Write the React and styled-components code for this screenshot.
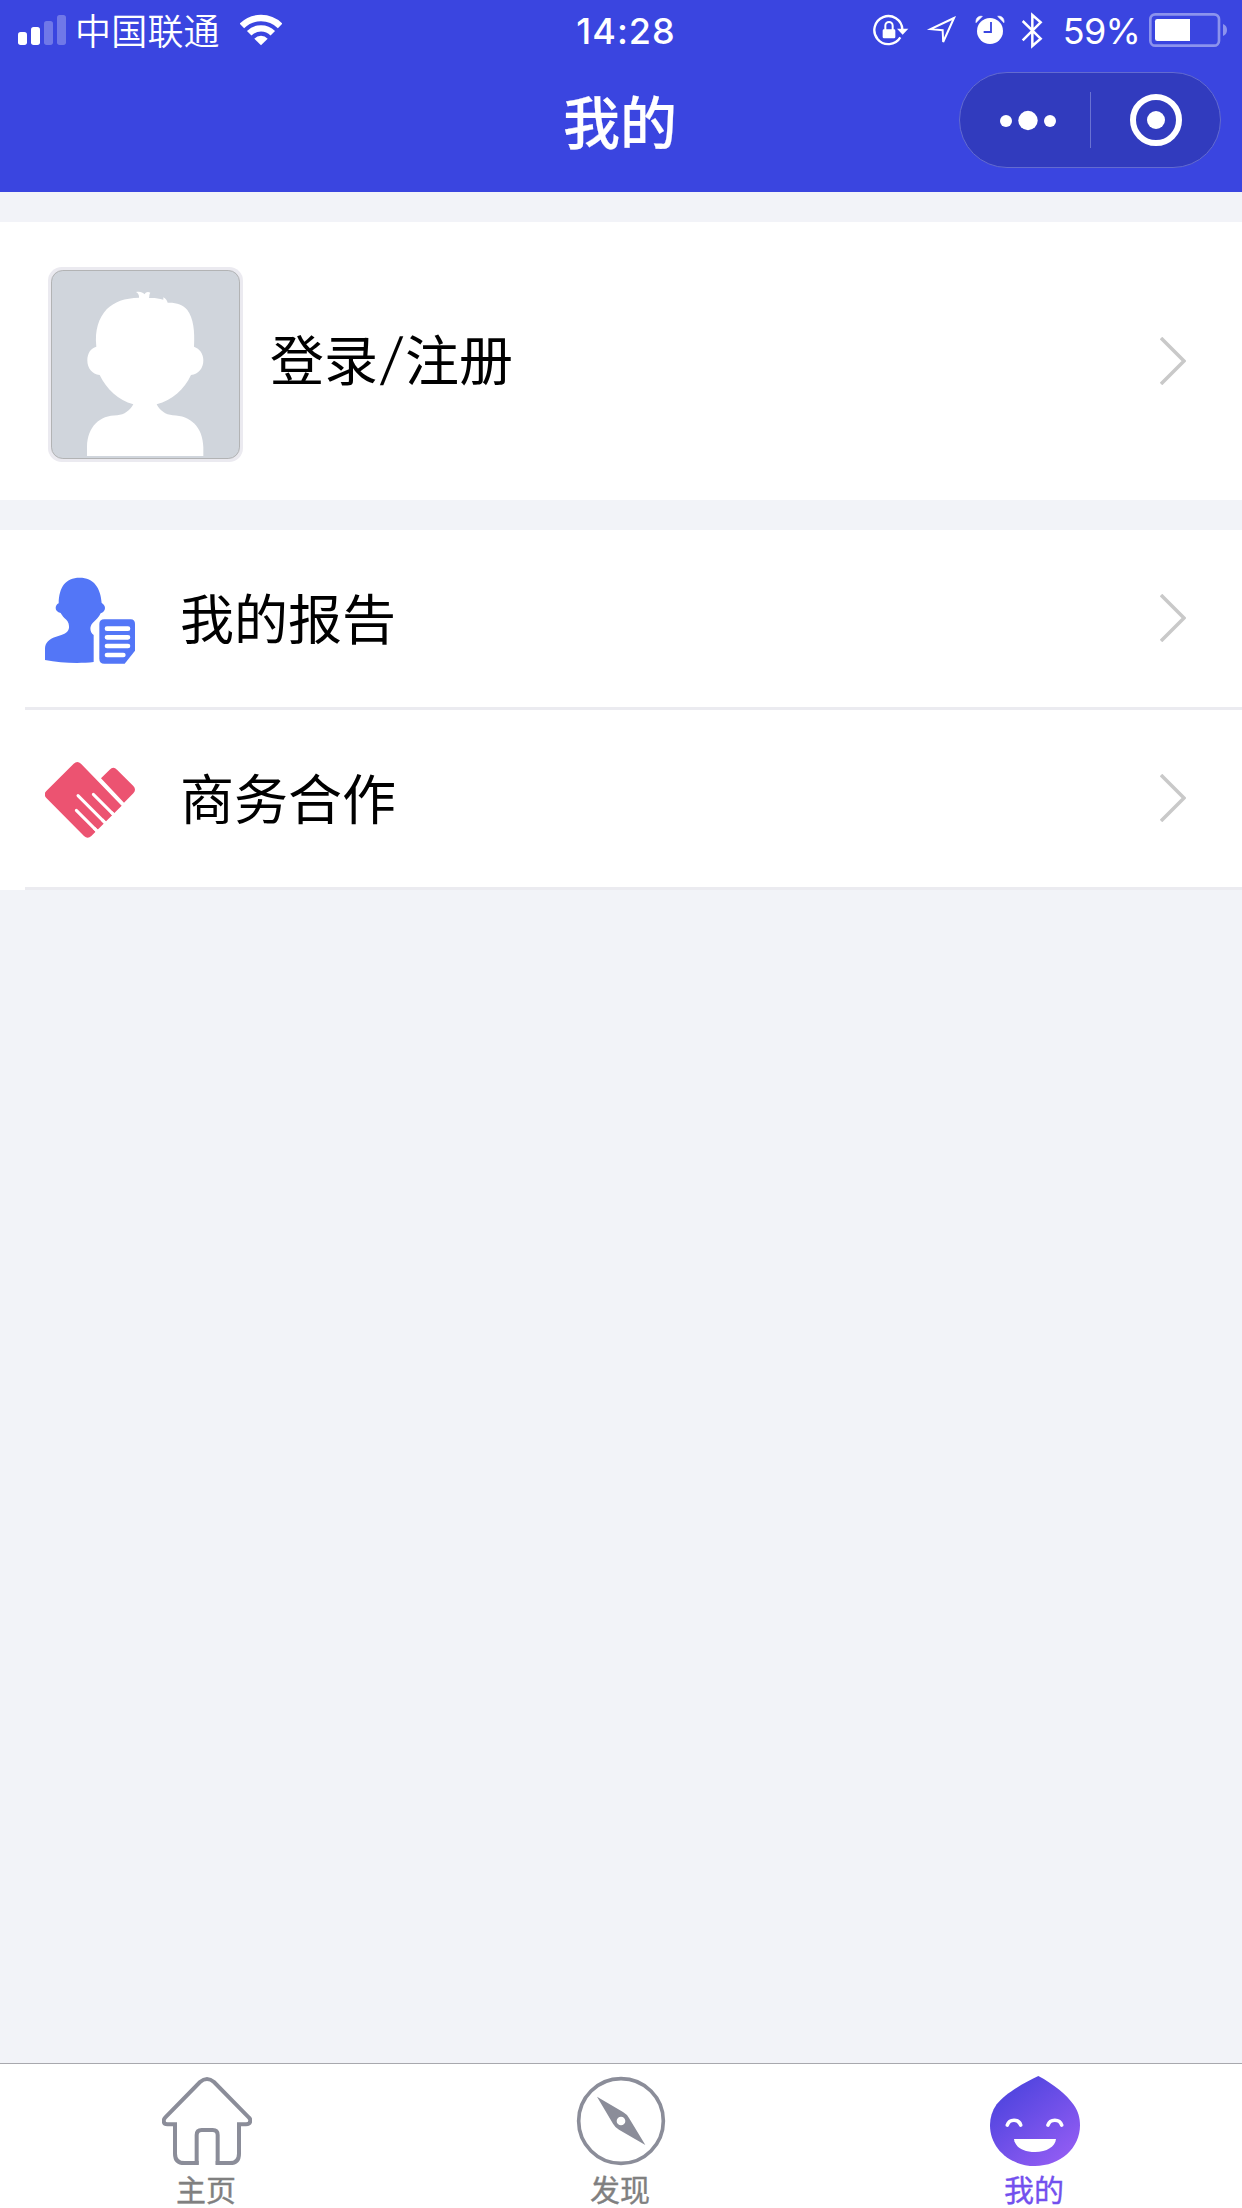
import React from 'react'

import styled, { createGlobalStyle } from 'styled-components'

const GlobalStyle = createGlobalStyle`
* {
  box-sizing: border-box;
}

body {
  margin: 0;
  background: #f2f3f8;
  font-family: "Noto Sans CJK SC", sans-serif;
}
`;

const Page = styled.div`
display: flex;
flex-direction: column;
height: 2208px;
background: #f2f3f8;
`;

const Header = styled.header`
height: 192px;
background: #3a45e0;
color: #fff;
`;

const StatusBar = styled.div`
display: grid;
grid-template-columns: 1fr auto 1fr;
height: 60px;
`;

const StatusSide = styled.div`
display: flex;
align-items: center;
justify-content: ${props => props.$end ? 'flex-end' : 'flex-start'};
height: 60px;
padding: 0 14px 0 18px;
`;

const Carrier = styled.span`
margin: 0 20px 3px 9px;
font-size: 36px;
font-weight: 350;
letter-spacing: 0.2px;
line-height: 56px;
`;

const Time = styled.span`
padding: 1px 0 0 10px;
font-family: "Inter", sans-serif;
font-size: 36px;
font-weight: 550;
letter-spacing: 1px;
line-height: 60px;
`;

const Percent = styled.span`
margin: 1px 8px 0 19px;
font-family: "Inter", sans-serif;
font-size: 36px;
font-weight: 400;
letter-spacing: -0.8px;
line-height: 60px;
`;

const Glyph = styled.svg`
display: block;
flex: none;
width: ${props => props.$w}px;
height: 60px;
margin-right: ${props => props.$gap || 0}px;
`;

const NavBar = styled.div`
display: grid;
grid-template-columns: 1fr auto 1fr;
height: 120px;
`;

const Title = styled.h1`
grid-column: 2;
margin: 0 2px 0 0;
font-size: 57px;
font-weight: 500;
line-height: 118px;
-webkit-text-stroke: 0.2px #fff;
`;

const Capsule = styled.div`
display: flex;
align-items: center;
justify-self: end;
width: 262px;
height: 96px;
margin: 12px 21px 0 0;
border: 1px solid #636bd0;
border-radius: 48px;
background: #313bbe;
`;

const CapsuleIcon = styled.svg`
display: block;
flex: none;
width: 130px;
height: 94px;
`;

const CapsuleLine = styled.div`
flex: none;
width: 1px;
height: 56px;
background: #6a72d2;
`;

const Account = styled.section`
display: flex;
align-items: center;
height: 278px;
margin-top: 30px;
padding: 0 56px 0 48px;
background: #fff;
`;

const Avatar = styled.svg`
display: block;
width: 195px;
height: 195px;
margin-top: 7px;
`;

const AccountName = styled.span`
flex: 1;
margin: 0 0 6px 27px;
font-size: 54px;
line-height: 80px;
color: #000;
`;

const Slash = styled.span`
display: inline-block;
width: 27px;
font-family: "Inter", sans-serif;
font-size: 56px;
font-weight: 350;
line-height: 60px;
text-align: center;
transform: skewX(-8deg) translateY(-2px);
`;

const Menu = styled.section`
margin-top: 30px;
background: #fff;
`;

const MenuRow = styled.div`
display: flex;
align-items: center;
height: 180px;
margin-left: 25px;
padding: 3px 56px 0 20px;
border-bottom: 3px solid #ebebf0;
`;

const MenuIcon = styled.svg`
display: block;
width: 90px;
height: 90px;
`;

const MenuLabel = styled.span`
flex: 1;
margin: 0 0 7px 45px;
font-size: 54px;
line-height: 80px;
color: #000;
`;

const Arrow = styled.svg`
display: block;
width: 26px;
height: 48px;
margin-top: ${props => props.$top || 0}px;
`;

const TabBar = styled.nav`
display: grid;
grid-template-columns: repeat(3, 1fr);
height: 145px;
margin-top: auto;
border-top: 1px solid #a8a8ae;
background: #fff;
`;

const Tab = styled.div`
display: flex;
flex-direction: column;
align-items: center;
padding-top: 12px;
`;

const TabLabel = styled.span`
margin-right: 2px;
font-size: 30px;
font-weight: 400;
line-height: 44px;
color: ${props => props.$active ? '#7350ee' : '#808080'};
-webkit-text-stroke: 0.35px currentColor;
`;

const TabIcon = styled.svg`
display: block;
flex: none;
width: 90px;
height: 90px;
`;

const Signal = () => (
  <Glyph $w={48} viewBox="54 0 144 180" fill="#fff">
    <rect x="54" y="96" width="27" height="39" rx="8" />
    <rect x="93" y="81" width="27" height="54" rx="8" />
    <rect x="132" y="63" width="27" height="72" rx="8" opacity=".28" />
    <rect x="171" y="45" width="27" height="90" rx="8" opacity=".28" />
  </Glyph>
)

const Wifi = () => (
  <Glyph $w={42} viewBox="720 0 126 180" fill="none" stroke="#fff" strokeWidth="19">
    <path d="M725.7 77.7A81 81 0 0 1 840.3 77.7" />
    <path d="M747.6 99.6A50 50 0 0 1 818.4 99.6" />
    <path d="M783 136L763 116A28 28 0 0 1 803 116Z" fill="#fff" stroke="none" />
  </Glyph>
)

const RotationLock = () => (
  <Glyph $w={36} $gap={16} viewBox="42 0 108 180" fill="none" stroke="#fff" strokeWidth="7">
    <path d="M130 88A42 42 0 1 0 124 112" />
    <path d="M114 86H148L131 104Z" fill="#fff" stroke="none" />
    <path d="M79 92V77A11 11 0 0 1 101 77V92" strokeWidth="6" />
    <rect x="71" y="88" width="38" height="27" rx="4" fill="#fff" stroke="none" />
  </Glyph>
)

const Location = () => (
  <Glyph $w={32} $gap={18} viewBox="198 0 96 180" fill="none" stroke="#fff" strokeWidth="6">
    <path d="M285 54L215 87.500L251 90.500L252.500 126Z" />
  </Glyph>
)

const Alarm = () => (
  <Glyph $w={30} $gap={16} viewBox="348 0 90 180">
    <circle cx="393" cy="93" r="39" fill="#fff" />
    <path d="M351 68C350 54 358 47 370 49ZM435 68C436 54 428 47 416 49Z" fill="#fff" stroke="#fff" strokeWidth="2" />
    <path d="M396 66V96H374" fill="none" stroke="#3a45e0" strokeWidth="5.500" />
  </Glyph>
)

const Bluetooth = () => (
  <Glyph $w={23} viewBox="486 0 69 180" fill="none" stroke="#fff" strokeWidth="7.500">
    <path d="M491 63L545 116L520 138V45L545 67L491 121" />
  </Glyph>
)

const Battery = () => (
  <Glyph $w={80} viewBox="864 0 240 180" fill="#fff">
    <rect x="871" y="43" width="206" height="94" rx="15" fill="none" stroke="#fff" strokeWidth="8" opacity=".42" />
    <path d="M892 57H990V123H892Q885 123 885 116V64Q885 57 892 57Z" />
    <path d="M1089 72Q1101 77 1101 90T1089 108Z" opacity=".42" />
  </Glyph>
)

const Chevron = ({ top }) => (
  <Arrow $top={top} viewBox="0 0 26 48" fill="none" stroke="#c9c9c9" strokeWidth="3.500">
    <path d="M1 1L24 24L1 47" />
  </Arrow>
)

const DefaultAvatar = () => (
  <Avatar viewBox="54 51 585 585">
    <rect x="54" y="51" width="585" height="585" rx="42" fill="#ebeaf0" />
    <rect x="64.500" y="61.500" width="564" height="564" rx="34" fill="#d0d5dc" stroke="#b2b3b4" strokeWidth="3" />
    <path
      fill="#fff"
      d="M171 618V590C173 530 208 496 262 496C283 494 300 482 310 463C265 450 230 418 209 375C186 373 172 355 172 331C172 309 183 294 199 290C194 239 206 205 230 178C253 155 284 144 327 143C328 136 325 130 318 126C329 124 338 126 344 133C347 126 354 124 361 128C357 133 359 138 357 144C372 143 386 145 400 149V142C407 145 411 151 413 158C438 157 459 163 472 180C490 204 495 243 492 290C509 296 520 311 520 331C520 355 506 373 483 375C463 418 427 450 380 463C389 482 407 494 428 496C482 497 519 532 520 592V618Z"
    />
  </Avatar>
)

const ReportIcon = () => (
  <MenuIcon viewBox="135 285 270 270">
    <path
      fill="#5376f7"
      d="M135 540V505C136 487 148 477 166 471L184 465C201 459 208 452 207 438C207 427 200 420 193 414C187 407 184 403 182 399C172 397 167 391 167 384C167 378 170 373 176 370C177 322 196 293 239 293C281 293 302 323 305 369C311 373 315 378 315 384C315 391 310 397 302 400C297 411 287 421 278 429C269 438 268 455 281 465V546C238 551 181 549 135 540Z"
    />
    <path
      fill="#5376f7"
      d="M313 418H392Q405 418 405 432V512L374 551H313Q298 551 298 536V432Q298 418 313 418Z"
    />
    <path d="M321 446H384M321 472H384M321 498H384M321 525H370" stroke="#fff" strokeWidth="14" strokeLinecap="round" />
  </MenuIcon>
)

const HandshakeIcon = () => (
  <MenuIcon viewBox="135 105 270 270">
    <path
      fill="#ec5371"
      d="M221 131Q232 121 243 131L365 257L274 348Q263 358 252 348L139 234Q129 223 139 213ZM303 175L329 149Q340 138 351 149L400 198Q410 209 400 220L372 248Z"
    />
    <path d="M280 223L340 283M234 227L314 307M229 271L292 334" stroke="#fff" strokeWidth="9" strokeLinecap="round" />
    <path d="M334 277L348 291M306 299L322 315M282 324L300 342" stroke="#fff" strokeWidth="9" />
  </MenuIcon>
)

const HomeIcon = () => (
  <TabIcon viewBox="96 108 270 270" fill="none" stroke="#8b8d99" strokeWidth="12">
    <path d="M206 369H163Q135 369 135 341V253H112Q101 253 101 242Q102 236 106 232L210 126Q231 108 252 126L356 232Q361 236 361 242Q360 253 348 253H327V341Q327 369 300 369H257" />
    <path d="M200 374V285Q200 270 215 270H248Q263 270 263 285V374" />
  </TabIcon>
)

const CompassIcon = () => (
  <TabIcon viewBox="108 108 270 270">
    <circle cx="243" cy="243" r="127" fill="none" stroke="#8b8d99" strokeWidth="11" />
    <path
      fill="#8b8d99"
      fillRule="evenodd"
      d="M171 170L249 216Q261 223 267 234L316 315L237 269Q225 262 219 251ZM243 230A13 13 0 1 0 243 256A13 13 0 1 0 243 230Z"
    />
  </TabIcon>
)

const FaceIcon = () => (
  <TabIcon viewBox="120 108 270 270">
    <defs>
      <linearGradient id="drop" x1="0.2" y1="0.15" x2="0.8" y2="0.9">
        <stop offset="0" stopColor="#5145df" />
        <stop offset="1" stopColor="#8f5bf2" />
      </linearGradient>
    </defs>
    <path d="M265 108C310 132 350 164 371 194C385 214 390 234 390 256C390 325 331 378 255 378C179 378 120 325 120 256C120 234 126 213 140 193C163 162 217 131 265 108Z" fill="url(#drop)" />
    <path d="M172 255C178 236 206 236 212 255M294 255C300 236 329 236 335 255" fill="none" stroke="#fff" strokeWidth="11" strokeLinecap="round" />
    <path d="M192 297H318C316 320 290 336 255 336C220 336 194 320 192 297Z" fill="#fff" />
  </TabIcon>
)

const menu = [
  { label: '我的报告', icon: <ReportIcon /> },
  { label: '商务合作', icon: <HandshakeIcon /> },
]

const tabs = [
  { label: '主页', icon: <HomeIcon /> },
  { label: '发现', icon: <CompassIcon /> },
  { label: '我的', icon: <FaceIcon />, active: true },
]

export default () => (
  <Page>
    <GlobalStyle />
    <Header>
      <StatusBar>
        <StatusSide>
          <Signal />
          <Carrier>中国联通</Carrier>
          <Wifi />
        </StatusSide>
        <Time>14:28</Time>
        <StatusSide $end>
          <RotationLock />
          <Location />
          <Alarm />
          <Bluetooth />
          <Percent>59%</Percent>
          <Battery />
        </StatusSide>
      </StatusBar>
      <NavBar>
        <Title>我的</Title>
        <Capsule>
          <CapsuleIcon viewBox="960 73 130 94" fill="#fff">
            <circle cx="1006" cy="121" r="6" />
            <circle cx="1028" cy="120.500" r="9.700" />
            <circle cx="1050" cy="121" r="6" />
          </CapsuleIcon>
          <CapsuleLine />
          <CapsuleIcon viewBox="1091 73 130 94" fill="#fff">
            <circle cx="1156" cy="120" r="23" fill="none" stroke="#fff" strokeWidth="6" />
            <circle cx="1156" cy="120" r="9" />
          </CapsuleIcon>
        </Capsule>
      </NavBar>
    </Header>
    <Account>
      <DefaultAvatar />
      <AccountName>登录<Slash>/</Slash>注册</AccountName>
      <Chevron />
    </Account>
    <Menu>
      {menu.map(({ label, icon }) => (
        <MenuRow key={label}>
          {icon}
          <MenuLabel>{label}</MenuLabel>
          <Chevron top={-4} />
        </MenuRow>
      ))}
    </Menu>
    <TabBar>
      {tabs.map(({ label, icon, active }) => (
        <Tab key={label}>
          {icon}
          <TabLabel $active={active}>{label}</TabLabel>
        </Tab>
      ))}
    </TabBar>
  </Page>
)
